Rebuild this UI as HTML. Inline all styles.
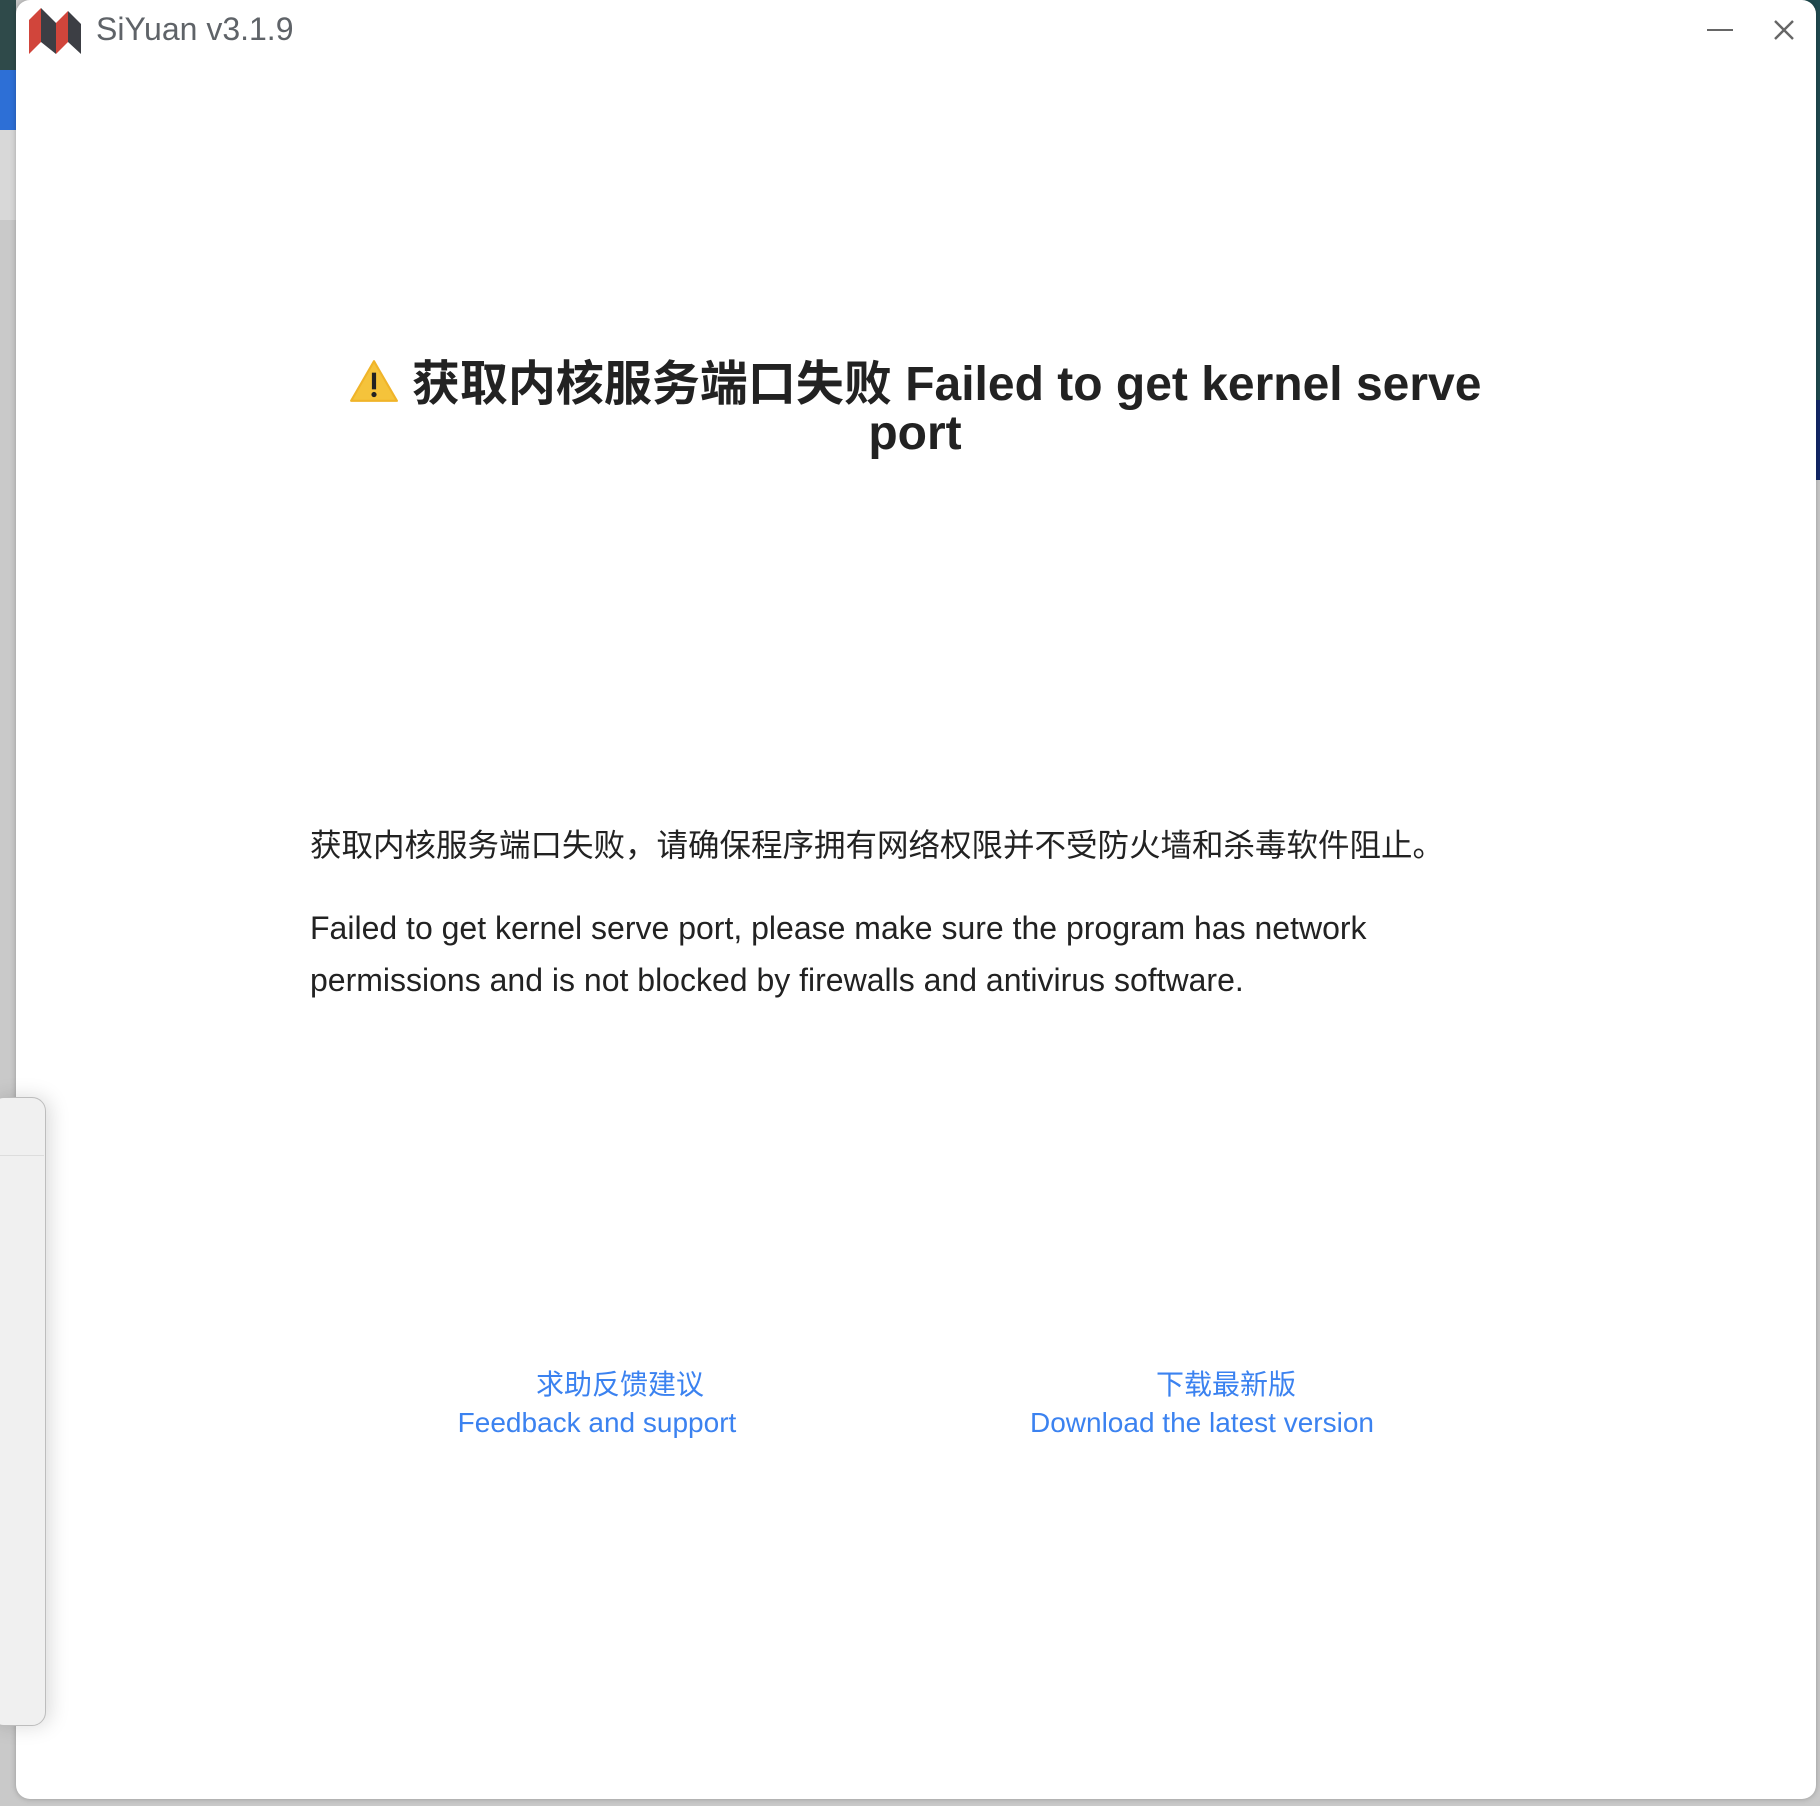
<!DOCTYPE html>
<html><head><meta charset="utf-8"><style>
html,body{margin:0;padding:0;width:1820px;height:1806px;overflow:hidden;background:#c9c9c9;position:relative;font-family:"Liberation Sans","Noto Sans CJK SC",sans-serif}
.abs{position:absolute}
#win{left:16px;top:0;width:1800px;height:1799px;background:#fff;border-radius:14px;box-shadow:0 0 6px rgba(0,0,0,.25)}
.t{white-space:nowrap}
a{color:#3b82f0;text-decoration:none}
</style></head><body>
<div class="abs" style="left:0;top:0;width:16px;height:70px;background:#2f4a4a"></div>
<div class="abs" style="left:0;top:70px;width:16px;height:60px;background:#2d6fd6"></div>
<div class="abs" style="left:0;top:130px;width:16px;height:90px;background:#d8d8d8"></div>
<div class="abs" style="left:1800px;top:0;width:20px;height:470px;background:#1f4b50"></div>
<div class="abs" style="left:1800px;top:400px;width:20px;height:80px;background:#14286a"></div>
<div id="win" class="abs"></div>
<svg class="abs" style="left:29px;top:8px" width="54" height="46" viewBox="0 0 54 46">
<polygon points="0,12 12,0 12,34 0,46" fill="#d1453b"/>
<polygon points="12,0 27,15 27,46 12,34" fill="#3c3e44"/>
<polygon points="27,15 39,3 39,34 27,46" fill="#d1453b"/>
<polygon points="39,3 52,16 52,46 39,34" fill="#3c3e44"/>
</svg>
<div class="abs t" style="left:96px;top:11px;font-size:32px;color:#5f6368">SiYuan v3.1.9</div>
<div class="abs" style="left:1707px;top:29px;width:26px;height:2px;background:#666"></div>
<svg class="abs" style="left:1773px;top:19px" width="22" height="22" viewBox="0 0 22 22"><path d="M2 2L20 20M20 2L2 20" stroke="#666" stroke-width="2.4"/></svg>
<div class="abs" style="left:290px;top:358px;width:1250px;text-align:center;font-size:48px;font-weight:bold;color:#222;line-height:49px">
<svg width="50" height="46" viewBox="0 0 48 44" style="vertical-align:-4px"><path d="M24 3L46 41H2Z" fill="#f5c33b" stroke="#f0b429" stroke-width="2" stroke-linejoin="round"/><rect x="22" y="14" width="4" height="16" fill="#222"/><circle cx="24" cy="35" r="2.5" fill="#222"/></svg> 获取内核服务端口失败 Failed to get kernel serve<br>port</div>
<div class="abs t" style="left:310px;top:820px;font-size:31.5px;color:#222">获取内核服务端口失败，请确保程序拥有网络权限并不受防火墙和杀毒软件阻止。</div>
<div class="abs" style="left:310px;top:902px;width:1200px;font-size:32px;line-height:52px;color:#222">Failed to get kernel serve port, please make sure the program has network<br>permissions and is not blocked by firewalls and antivirus software.</div>
<div class="abs t" style="left:420px;top:1365px;width:400px;text-align:center;font-size:28px;line-height:39px"><a>求助反馈建议</a></div>
<div class="abs t" style="left:397px;top:1403px;width:400px;text-align:center;font-size:28px;line-height:39px"><a>Feedback and support</a></div>
<div class="abs t" style="left:1026px;top:1365px;width:400px;text-align:center;font-size:28px;line-height:39px"><a>下载最新版</a></div>
<div class="abs t" style="left:1002px;top:1403px;width:400px;text-align:center;font-size:28px;line-height:39px"><a>Download the latest version</a></div>
<div class="abs" style="left:-10px;top:1097px;width:54px;height:627px;background:#f0f0f0;border:1px solid #bdbdbd;border-radius:14px;box-shadow:4px 0 20px rgba(0,0,0,.15)"></div>
<div class="abs" style="left:0;top:1155px;width:44px;height:1px;background:#ddd"></div>
</body></html>
